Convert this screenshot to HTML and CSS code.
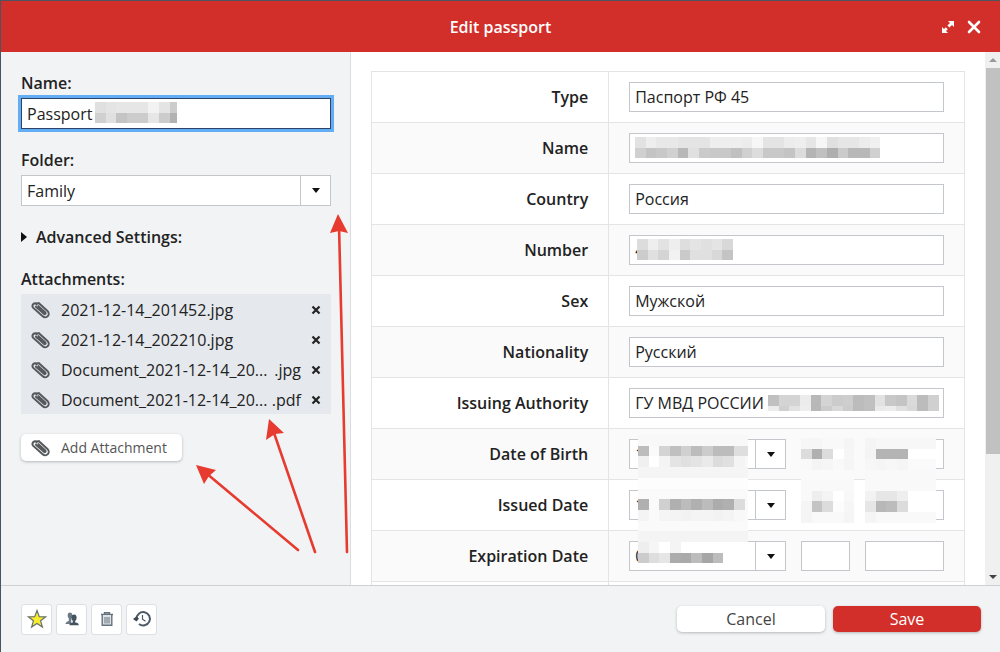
FILE: index.html
```
<!DOCTYPE html>
<html lang="en">
<head>
    <meta charset="UTF-8">
    <meta name="viewport" content="width=device-width, initial-scale=1.0">
    <title>Edit passport</title>
    <link rel="stylesheet" href="styles.css">
</head>
<body>
    <svg class="sprite" aria-hidden="true">
        <symbol id="clip" viewBox="0 0 20 18">
            <g transform="rotate(42 10 9)" fill="none" stroke="#55595c" stroke-width="2" stroke-linecap="round">
                <path d="M4 5.4h11.5a3.6 3.6 0 0 1 0 7.2H2.5a2.8 2.8 0 0 1-.2-5.4"/>
                <path d="M4 5.4a1.8 1.8 0 0 0-1 2.6"/>
                <path d="M4 9.9h10.8a1 1 0 0 0 0-2H5.5"/>
            </g>
        </symbol>
        <symbol id="cross" viewBox="0 0 10 10">
            <path d="M1.5 1.5l7 7M8.5 1.5l-7 7" fill="none" stroke="currentColor" stroke-width="2.2"/>
        </symbol>
    </svg>

    <div class="dialog">
        <header class="dialog-header">
            <h1>Edit passport</h1>
            <div class="window-buttons">
                <button type="button" aria-label="Expand">
                    <svg width="14" height="14" viewBox="0 0 14 14" fill="#fff"><path d="M7 1h6v6l-2-2-2.6 2.6-2-2L9 3zM7 13H1V7l2 2 1.8-1.8 2 2L5 11z"/></svg>
                </button>
                <button type="button" aria-label="Close">
                    <svg width="14" height="14" viewBox="0 0 14 14"><path d="M2 2l10 10M12 2L2 12" stroke="#fff" stroke-width="2.6" stroke-linecap="round"/></svg>
                </button>
            </div>
        </header>

        <main class="dialog-body">
            <section class="sidebar">
                <label for="name">Name:</label>
                <div class="field focused">
                    <input type="text" id="name" value="Passport">
                    <svg class="mosaic after-name" data-cells="e0e4e6e6e6f2e4cc d0e0c4cccce6ccb2"></svg>
                </div>

                <label for="folder">Folder:</label>
                <div class="field combo folder">
                    <select id="folder"><option>Family</option></select>
                </div>

                <button type="button" class="advanced">Advanced Settings:</button>

                <h2>Attachments:</h2>
                <ul class="attachments">
                    <li>
                        <svg class="clip"><use href="#clip"/></svg>
                        <span class="file">2021-12-14_201452.jpg</span>
                        <button type="button" aria-label="Remove"><svg><use href="#cross"/></svg></button>
                    </li>
                    <li>
                        <svg class="clip"><use href="#clip"/></svg>
                        <span class="file">2021-12-14_202210.jpg</span>
                        <button type="button" aria-label="Remove"><svg><use href="#cross"/></svg></button>
                    </li>
                    <li>
                        <svg class="clip"><use href="#clip"/></svg>
                        <span class="file">Document_2021-12-14_20...</span>
                        <span class="ext">.jpg</span>
                        <button type="button" aria-label="Remove"><svg><use href="#cross"/></svg></button>
                    </li>
                    <li>
                        <svg class="clip"><use href="#clip"/></svg>
                        <span class="file">Document_2021-12-14_20...</span>
                        <span class="ext">.pdf</span>
                        <button type="button" aria-label="Remove"><svg><use href="#cross"/></svg></button>
                    </li>
                </ul>
                <button type="button" class="add-attachment"><svg class="clip"><use href="#clip"/></svg>Add Attachment</button>
            </section>

            <section class="details">
                <table>
                    <tr>
                        <th><label for="type">Type</label></th>
                        <td><div class="field"><input type="text" id="type" value="Паспорт РФ 45"></div></td>
                    </tr>
                    <tr>
                        <th><label for="fullName">Name</label></th>
                        <td><div class="field"><input type="text" id="fullName">
                            <svg class="mosaic" data-cells="e2eee8e8e4e4e4eeeeeeecf6e4e4eceee6f6e0e6e6ecf0 d0c4c8d0b8e0cac8c8c0d0dcc8c8c4dcb4c0aecab8b8d0"></svg></div></td>
                    </tr>
                    <tr>
                        <th><label for="country">Country</label></th>
                        <td><div class="field"><input type="text" id="country" value="Россия"></div></td>
                    </tr>
                    <tr>
                        <th><label for="number">Number</label></th>
                        <td><div class="field"><input type="text" id="number" value="4">
                            <svg class="mosaic after-digit" data-cells="dceee2eedee4e0e4d8 cce0d4f2cae0e0d8c4"></svg></div></td>
                    </tr>
                    <tr>
                        <th><label for="sex">Sex</label></th>
                        <td><div class="field"><input type="text" id="sex" value="Мужской"></div></td>
                    </tr>
                    <tr>
                        <th><label for="nationality">Nationality</label></th>
                        <td><div class="field"><input type="text" id="nationality" value="Русский"></div></td>
                    </tr>
                    <tr>
                        <th><label for="authority">Issuing Authority</label></th>
                        <td><div class="field"><input type="text" id="authority" value="ГУ МВД РОССИИ">
                            <svg class="mosaic after-authority" data-cells="c0d4d4ecb8d4cccebcc0e2c8c4dabcd0 ecd0e2eeb8ccd8ccbcc0eaece0d8bcd0"></svg></div></td>
                    </tr>
                    <tr>
                        <th><label for="birthMonth">Date of Birth</label></th>
                        <td><div class="date">
                            <div class="field combo"><select id="birthMonth"><option>1</option></select>
                                <svg class="mosaic month first" data-cells="f8f8f8f8f8f8f8f8f8f8f8 bcfad4c0d0bcccbcbcdedef8 f0fff4e4e0e4eadce0f4f8 f5f5f5f5f5f5f5f5f5f5f5"></svg></div>
                            <div class="field day"><input type="text" aria-label="Birth day">
                                <svg class="mosaic first" data-cells="f6f6f9f9f5 dcb0dcfff6 f9f4f6f9f5 fafafafafa"></svg></div>
                            <div class="field year"><input type="text" aria-label="Birth year">
                                <svg class="mosaic first" data-cells="f5f7f7f7f7f7f7 f4b4b4b4ffffff f7f5f7f5fafafa f9f9f9f9f9f9f9"></svg></div>
                        </div></td>
                    </tr>
                    <tr>
                        <th><label for="issuedMonth">Issued Date</label></th>
                        <td><div class="date">
                            <div class="field combo"><select id="issuedMonth"><option>1</option></select>
                                <svg class="mosaic month second" data-cells="fdfdfdfdfdfdfdfdfdfdfd fafafafafafafafafafafa b0fad0b0bcb0bcacb0dcfa f4faf5f4f2f4f4f2f4f8fa fafafafafafafafafafafa f4f4f4f4f4f4f4f4f4f4f4"></svg></div>
                            <div class="field day"><input type="text" aria-label="Issued day">
                                <svg class="mosaic second" data-cells="f9f9f9f9f9 f9eef4fff8 f5c4dcfcf6 f5f9f9f9f5"></svg></div>
                            <div class="field year"><input type="text" aria-label="Issued year">
                                <svg class="mosaic second" data-cells="f9f9f9f9f9f9f9 f2e6e6eeffffff e6b8bcdcffffff f5f9f9f9f9f9f9"></svg></div>
                        </div></td>
                    </tr>
                    <tr>
                        <th><label for="expMonth">Expiration Date</label></th>
                        <td><div class="date">
                            <div class="field combo"><select id="expMonth"><option>0</option></select>
                                <svg class="mosaic month" data-cells="eef6fff4ffffffff ccdee6acaabca6bc"></svg></div>
                            <div class="field day"><input type="text" aria-label="Expiration day"></div>
                            <div class="field year"><input type="text" aria-label="Expiration year"></div>
                        </div></td>
                    </tr>
                    <tr>
                        <th></th>
                        <td><div class="field"></div></td>
                    </tr>
                </table>
            </section>

            <div class="scrollbar">
                <span class="up"></span>
                <div class="track"><div class="thumb"></div></div>
                <span class="down"></span>
            </div>
        </main>

        <footer class="dialog-footer">
            <div class="tools">
                <button type="button" aria-label="Favorite">
                    <svg viewBox="0 0 20 20"><path d="M10 1.5l2.3 6.1 6.4.2-5.1 4 1.8 6.3L10 14.4l-5.4 3.7 1.8-6.3-5.1-4 6.4-.2z" fill="#f7ec2e" stroke="#66716f" stroke-width="1.2"/></svg>
                </button>
                <button type="button" aria-label="Share">
                    <svg viewBox="0 0 20 20"><g fill="#6b7a86"><ellipse cx="8" cy="6.4" rx="2.3" ry="3"/><path d="M6.8 9h2.4v6H3.500q0-2 3.300-3z"/></g><g fill="#44545f"><ellipse cx="12" cy="8.800" rx="2.600" ry="3.300"/><path d="M10.800 11.500h2.400v2q3.600.3 3.600 2.700H7.400q0-2.400 3.400-2.700z"/></g></svg>
                </button>
                <button type="button" aria-label="Delete">
                    <svg viewBox="0 0 20 20" fill="none" stroke="#66727c" stroke-width="1.400"><path d="M4 5.500h12M7.500 5.500V3.700h5v1.800"/><path d="M5.200 6v10.300h9.600V6" fill="#dde2e7"/><path d="M8 8v6.500M10 8v6.500M12 8v6.500" stroke-width="1"/></svg>
                </button>
                <button type="button" aria-label="History">
                    <svg viewBox="0 0 20 20" fill="none" stroke="#4d5964" stroke-width="2"><path d="M4.500 10a6.700 6.700 0 1 1 2.500 5"/><path d="M1 10l3.500-2.500L7 9.500 4.500 12.500z" fill="#3c4853" stroke="none"/><path d="M10.500 6v4.200l3 2" stroke-width="1.200"/></svg>
                </button>
            </div>
            <button type="button" class="action">Cancel</button>
            <button type="button" class="action save">Save</button>
        </footer>

        <svg class="arrows" width="360" height="560" aria-hidden="true">
            <g stroke="#e63b2e" stroke-width="2.600" stroke-linecap="round">
                <path d="M339 225L347 552M273 430L315 552M206 473L298 550"/>
            </g>
            <g fill="#e63b2e">
                <path d="M338 214l10 19-9-2-9 2z"/>
                <path d="M269 419l15 14-9 1-9 6z"/>
                <path d="M196 465l20 5-7 6-5 8z"/>
            </g>
        </svg>
    </div>

    <script src="script.js"></script>
</body>
</html>
```
FILE: script.js
```
// Draws the blocks that cover private values.
// data-cells: rows split by a space, two hex digits of grey per cell.
const cell = 32 / 3;

document.querySelectorAll('.mosaic').forEach(svg => {
    const rows = svg.dataset.cells.split(' ').map(row => row.match(/../g));
    svg.setAttribute('width', Math.round(rows[0].length * cell));
    svg.setAttribute('height', Math.round(rows.length * cell));

    rows.forEach((row, y) => {
        row.forEach((grey, x) => {
            const rect = document.createElementNS('http://www.w3.org/2000/svg', 'rect');
            rect.setAttribute('x', Math.round(x * cell));
            rect.setAttribute('y', Math.round(y * cell));
            rect.setAttribute('width', 11);
            rect.setAttribute('height', 11);
            rect.setAttribute('fill', '#' + grey + grey + grey);
            svg.appendChild(rect);
        });
    });
});
```
FILE: styles.css
```
* {
    box-sizing: border-box;
}
body {
    margin: 0;
    font-family: "Open Sans", sans-serif;
    font-size: 16px;
    line-height: 22px;
    color: #222;
    background-color: #4a5560;
}
button, input, select {
    font: inherit;
    color: inherit;
    margin: 0;
}
button {
    display: flex;
    align-items: center;
    justify-content: center;
    padding: 0;
    border: none;
    background: none;
    cursor: pointer;
}
.sprite {
    display: none;
}
.dialog {
    position: relative;
    display: flex;
    flex-direction: column;
    height: 100vh;
    border: 1px solid #4a5560;
    border-width: 1px 0 0 1px;
    overflow: hidden;
    background-color: #f2f3f5;
}
.dialog-header {
    display: grid;
    grid-template-columns: 1fr auto 1fr;
    align-items: center;
    height: 51px;
    flex: none;
    padding: 0 19px;
    background-color: #d32f2a;
    color: #fff;
}
h1, h2 {
    margin: 0;
    font-size: 16px;
    font-weight: 600;
}
h1 {
    grid-column: 2;
}
.window-buttons {
    display: flex;
    justify-content: flex-end;
    gap: 12px;
}
.dialog-body {
    display: flex;
    flex: 1;
    min-height: 0;
}
.sidebar {
    display: flex;
    flex-direction: column;
    width: 350px;
    flex: none;
    padding: 20px 19px 0 20px;
    border-right: 1px solid #dadcde;
}
.sidebar label, .sidebar h2, .advanced {
    font-weight: 600;
    color: #222;
}
.field {
    position: relative;
    height: 30px;
}
.field input, .field select {
    display: block;
    width: 100%;
    height: 100%;
    padding: 0 5px;
    border: 1px solid #c3c6cb;
    border-radius: 0;
    background-color: #fff;
    outline: none;
    appearance: none;
}
.combo::after {
    content: "";
    position: absolute;
    right: 11px;
    top: 13px;
    border: 4px solid transparent;
    border-top: 5px solid #111;
    border-bottom: none;
}
.combo::before {
    content: "";
    position: absolute;
    right: 30px;
    top: 0;
    bottom: 0;
    border-left: 1px solid #c3c6cb;
}
.sidebar .field {
    height: 31px;
    margin: 4px 0 20px;
}
.focused input {
    border-color: #2d4369;
    box-shadow: 0 0 0 3px #62adf3;
}
.advanced {
    align-self: flex-start;
    gap: 9px;
}
.advanced::before {
    content: "";
    border: 5px solid transparent;
    border-left: 6px solid #111;
    border-right: none;
}
.sidebar h2 {
    margin-top: 20px;
}
.attachments {
    margin: 4px 0 20px;
    padding: 0;
    list-style: none;
    background-color: #e5e8ed;
}
.attachments li {
    display: flex;
    align-items: center;
    height: 30px;
    padding: 1px 10px 0;
}
.clip {
    width: 20px;
    height: 18px;
    margin-right: 10px;
    flex: none;
}
.ext {
    margin-left: auto;
}
.attachments button {
    width: 10px;
    height: 10px;
    margin-left: auto;
}
.attachments .ext + button {
    margin-left: 10px;
}
.attachments button svg {
    width: 10px;
    height: 10px;
}
.add-attachment {
    align-self: flex-start;
    height: 27px;
    padding: 0 15px 0 10px;
    border-radius: 5px;
    font-size: 14px;
    color: #555;
    background-color: #fff;
    box-shadow: 0 1px 3px rgba(0, 0, 0, 0.25);
}
.details {
    flex: 1;
    min-width: 0;
    padding: 19px 20px 0;
    overflow: hidden;
    background-color: #fff;
}
table {
    width: 100%;
    border-collapse: collapse;
}
tr:nth-child(even) {
    background-color: #fafafa;
}
th, td {
    border: 1px solid #e4e4e4;
    padding: 10px 20px;
}
th {
    width: 40%;
    font-weight: 600;
    text-align: right;
    color: #222;
}
.date {
    display: flex;
    gap: 15px;
}
.date .combo {
    flex: 1;
}
.day {
    width: 49px;
}
.year {
    width: 79px;
}
.mosaic {
    position: absolute;
    left: 6px;
    top: 4px;
    z-index: 1;
    shape-rendering: crispEdges;
}
.after-name {
    left: 74px;
    max-width: 82px;
}
.after-digit {
    left: 8px;
}
.after-authority {
    left: 139px;
    height: 16px;
    top: 7px;
}
.month {
    left: 9px;
    top: 1px;
    max-width: 110px;
}
.month.first {
    top: -4px;
}
.month.second {
    top: -12px;
}
.day .mosaic, .year .mosaic {
    left: 0;
    max-width: 71px;
}
.day .first, .year .first {
    top: -1px;
}
.day .second, .year .second {
    top: -10px;
}
.scrollbar {
    display: flex;
    flex-direction: column;
    align-items: center;
    width: 15px;
    flex: none;
    background-color: #f0f0f0;
}
.up, .down {
    margin: 6px 0;
    border: 4px solid transparent;
}
.up {
    border-top: none;
    border-bottom: 4px solid #999;
}
.down {
    border-bottom: none;
    border-top: 4px solid #444;
}
.track {
    flex: 1;
    width: 100%;
}
.thumb {
    height: 77%;
    margin-left: 1px;
    background-color: #c1c1c1;
}
.dialog-footer {
    display: flex;
    align-items: center;
    gap: 8px;
    height: 67px;
    flex: none;
    padding: 0 19px 0 20px;
    border-top: 1px solid #cdcfd1;
}
.tools {
    display: flex;
    gap: 4px;
    margin-right: auto;
}
.tools button {
    width: 31px;
    height: 31px;
    border: 1px solid #dcdfe4;
    border-radius: 3px;
    background-color: #fff;
}
.tools svg {
    width: 20px;
    height: 20px;
}
.action {
    width: 148px;
    height: 26px;
    border-radius: 5px;
    background-color: #fff;
    color: #444;
    box-shadow: 0 1px 3px rgba(0, 0, 0, 0.25);
}
.save {
    background-color: #d32f2a;
    color: #fff;
}
.arrows {
    position: absolute;
    left: -1px;
    top: -1px;
    z-index: 2;
    pointer-events: none;
}
```
